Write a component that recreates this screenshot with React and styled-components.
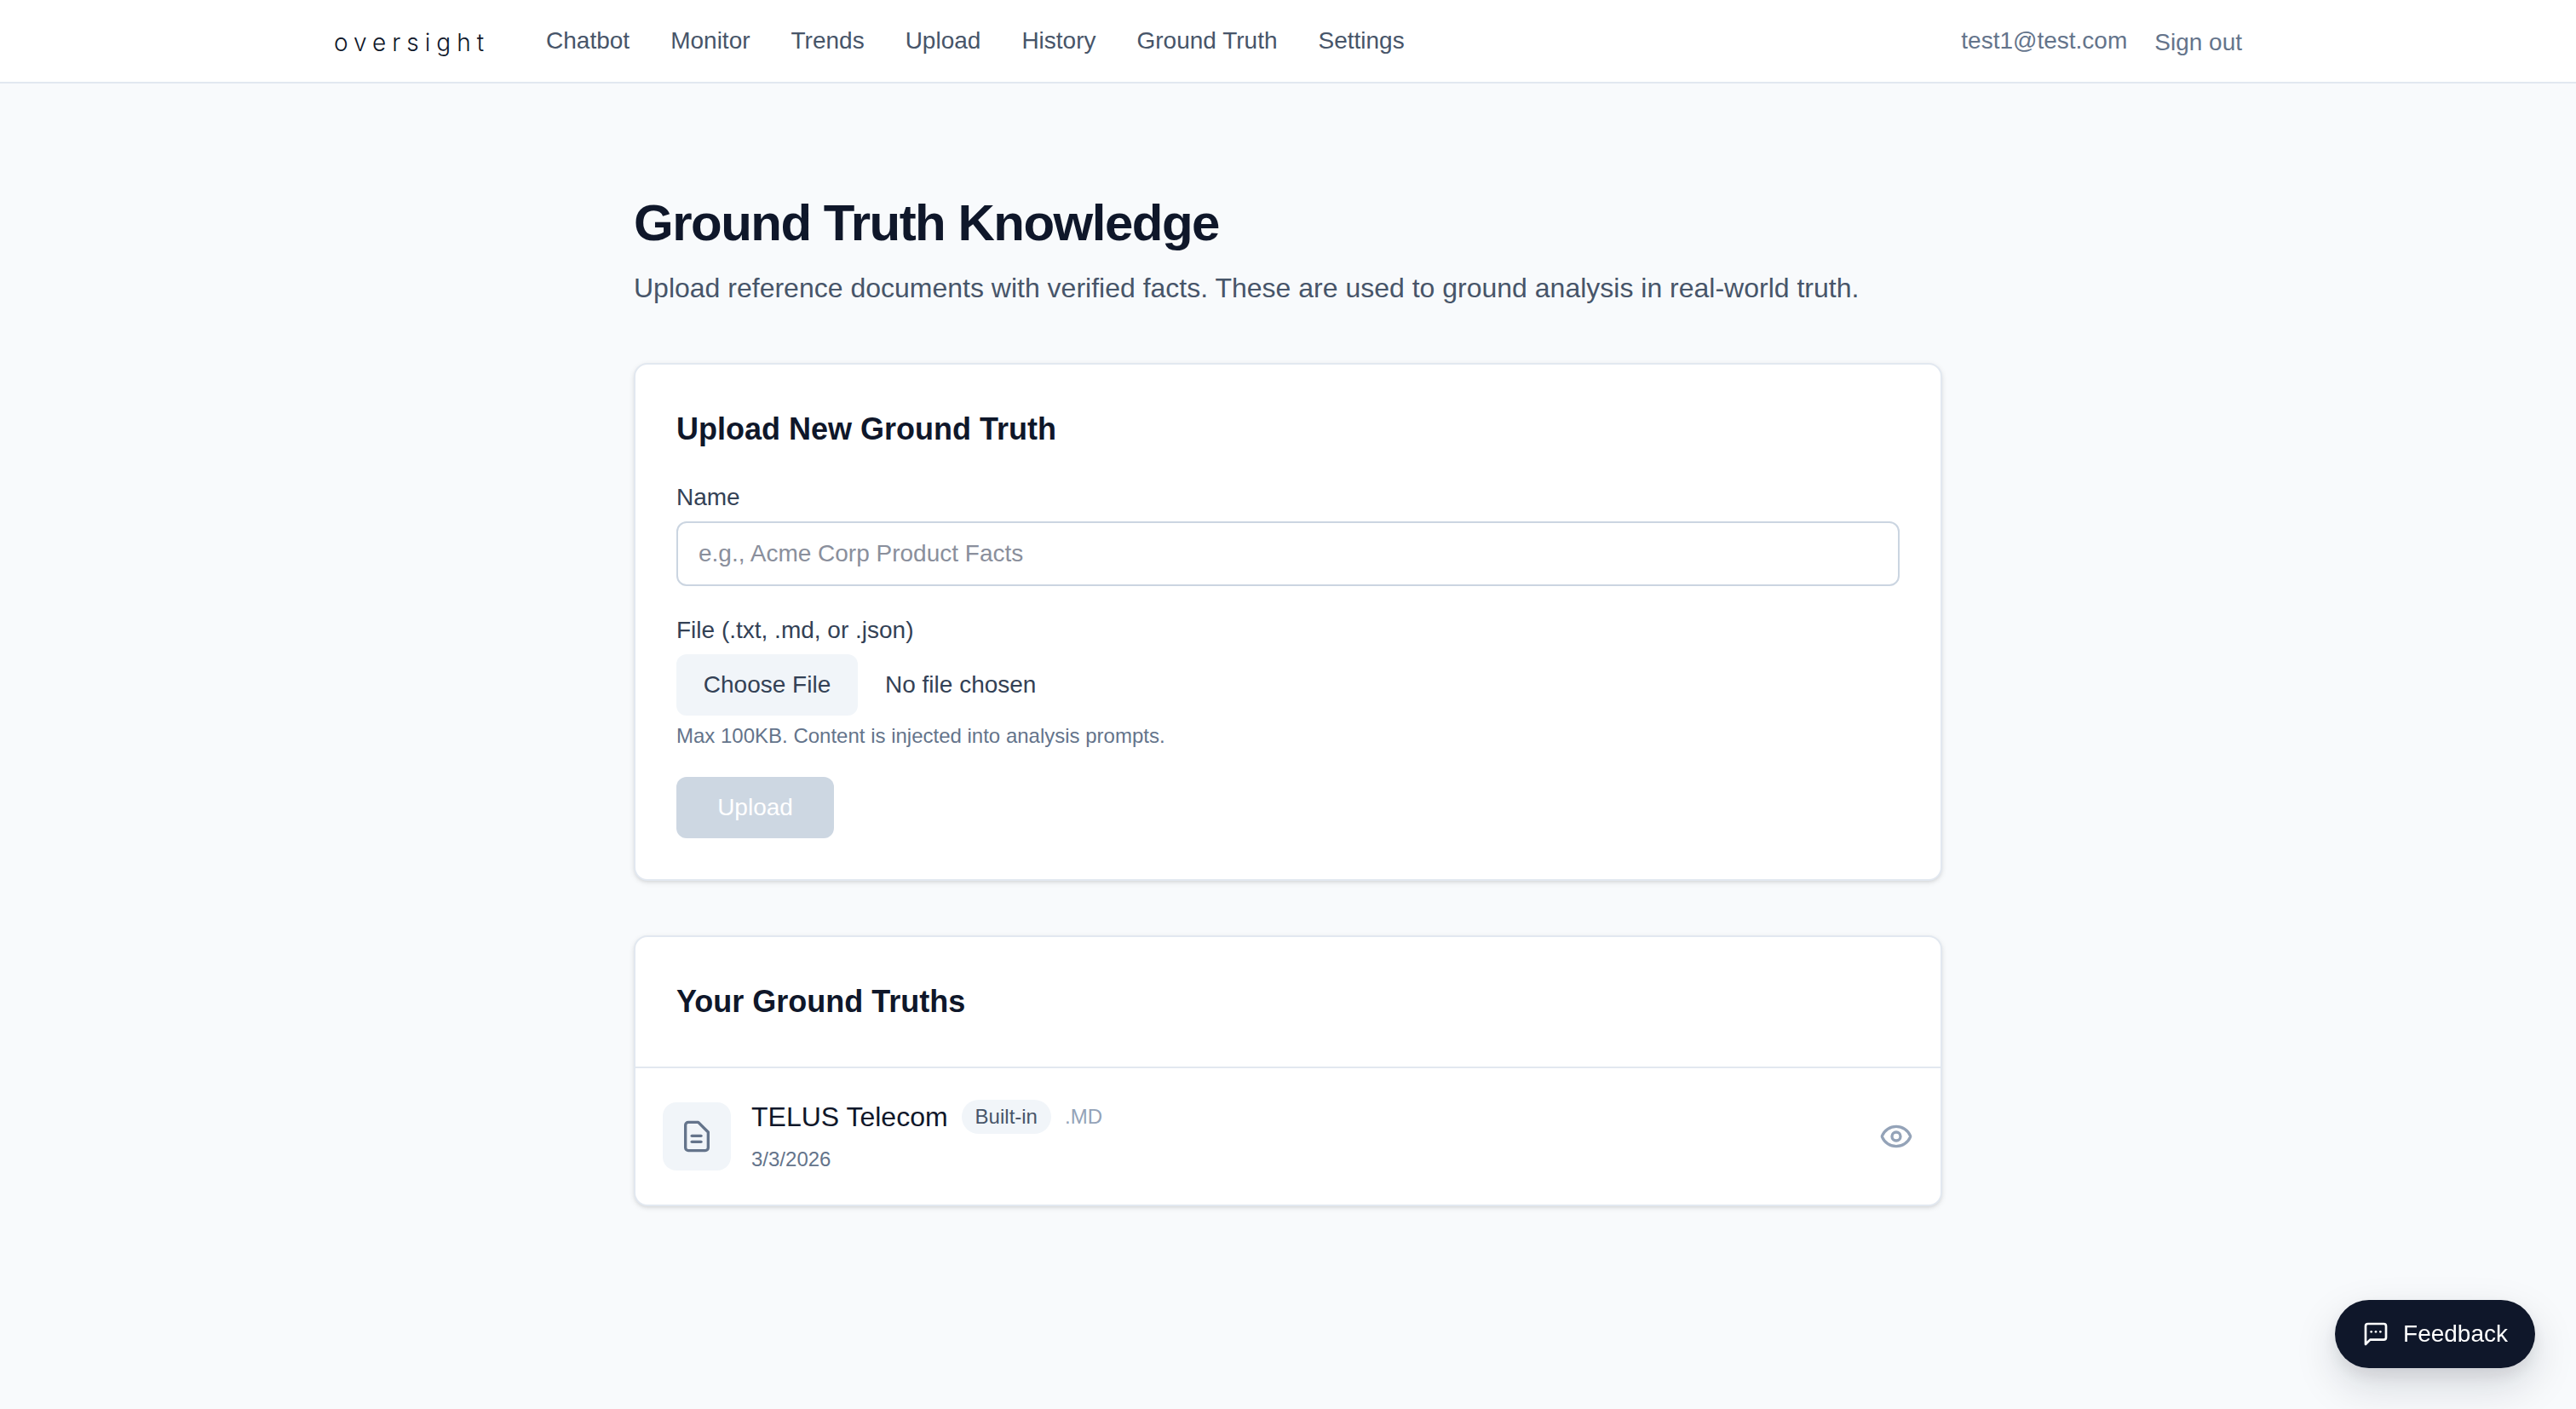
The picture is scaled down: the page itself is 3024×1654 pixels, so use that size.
import React from "react";
import styled, { createGlobalStyle } from "styled-components";
import { Eye } from "lucide-react";

const GlobalStyle = createGlobalStyle`
	html, body {
		margin: 0;
		padding: 0;
		background: #f8fafc;
		font-family: "Liberation Sans", Arial, sans-serif;
	}
	* {
		box-sizing: border-box;
	}
`;

const Page = styled.div`
	min-height: 1654px;
	background: #f8fafc;
`;

const TopBar = styled.header`
	height: 98px;
	background: #fff;
	border-bottom: 2px solid #e2e8f0;
`;

const TopBarInner = styled.div`
	max-width: 2304px;
	height: 100%;
	margin: 0 auto;
	padding: 0 32px;
	display: flex;
	align-items: center;
	justify-content: space-between;
`;

const LeftGroup = styled.div`
	display: flex;
	align-items: center;
	gap: 66px;
`;

const Logo = styled.span`
	font-family: "Inter", sans-serif;
	font-size: 28px;
	font-weight: 300;
	letter-spacing: 7px;
	color: #0f172a;
	position: relative;
	top: 2px;
`;

const NavLinks = styled.nav`
	display: flex;
	gap: 48px;
`;

const NavLink = styled.a`
	font-size: 28px;
	color: #475569;
	text-decoration: none;
`;

const RightGroup = styled.div`
	display: flex;
	align-items: center;
	gap: 32px;
	font-size: 28px;
	color: #64748b;
`;

const SignOut = styled.span`
	position: relative;
	top: 2px;
`;

const Main = styled.main`
	width: 1536px;
	margin: 0 auto;
	padding-top: 128px;
`;

const Title = styled.h1`
	margin: 0;
	font-size: 60px;
	line-height: 72px;
	font-weight: 700;
	color: #0f172a;
	letter-spacing: -0.025em;
`;

const Subtitle = styled.p`
	margin: 16px 0 0;
	font-size: 32px;
	line-height: 48px;
	color: #475569;
`;

const Card = styled.section`
	background: #fff;
	border: 2px solid #e2e8f0;
	border-radius: 16px;
	box-shadow: 0 2px 6px rgba(0, 0, 0, 0.1), 0 2px 4px -2px rgba(0, 0, 0, 0.1);
	margin-top: ${(props) => props.gap}px;
	padding: ${(props) => (props.flush ? "0" : "48px")};
`;

const CardHeading = styled.h2`
	margin: 0;
	font-size: 36px;
	line-height: 56px;
	font-weight: 700;
	color: #0f172a;
`;

const Field = styled.div`
	margin-top: ${(props) => props.gap}px;
`;

const Label = styled.label`
	display: block;
	font-size: 28px;
	line-height: 40px;
	color: #334155;
	margin-bottom: 8px;
`;

const TextInput = styled.input`
	display: block;
	width: 100%;
	height: 76px;
	padding: 0 24px;
	border: 2px solid #cbd5e1;
	border-radius: 12px;
	background: #fff;
	font-family: inherit;
	font-size: 28px;
	color: #0f172a;
	&::placeholder {
		color: #8a8f9c;
	}
`;

const FileRow = styled.div`
	display: flex;
	align-items: center;
	gap: 32px;
`;

const ChooseButton = styled.span`
	width: 213px;
	height: 72px;
	display: flex;
	align-items: center;
	justify-content: center;
	border-radius: 12px;
	background: #f1f5f9;
	font-size: 28px;
	color: #334155;
`;

const NoFile = styled.span`
	font-size: 28px;
	color: #334155;
`;

const Hint = styled.p`
	margin: 8px 0 0;
	font-size: 24px;
	line-height: 32px;
	color: #64748b;
`;

const UploadButton = styled.button`
	display: block;
	width: 185px;
	height: 72px;
	margin-top: 32px;
	border: none;
	border-radius: 12px;
	background: #cbd5e1;
	font-family: inherit;
	font-size: 28px;
	color: #fff;
	opacity: 0.95;
`;

const ListHeader = styled.div`
	padding: 48px;
	height: 154px;
	display: flex;
	align-items: center;
	border-bottom: 2px solid #e2e8f0;
`;

const ListRow = styled.div`
	height: 160px;
	padding: 0 32px;
	display: flex;
	align-items: center;
	gap: 24px;
`;

const IconBox = styled.div`
	width: 80px;
	height: 80px;
	flex: none;
	display: flex;
	align-items: center;
	justify-content: center;
	border-radius: 16px;
	background: #f1f5f9;
	color: #64748b;
`;

const RowText = styled.div`
	flex: 1;
`;

const RowTitle = styled.div`
	display: flex;
	align-items: center;
	gap: 16px;
`;

const RowName = styled.span`
	font-size: 32px;
	color: #0f172a;
`;

const Badge = styled.span`
	height: 40px;
	padding: 0 16px;
	display: flex;
	align-items: center;
	border-radius: 20px;
	background: #f1f5f9;
	font-size: 24px;
	color: #475569;
`;

const Extension = styled.span`
	font-size: 24px;
	color: #94a3b8;
`;

const RowDate = styled.div`
	margin-top: 14px;
	font-size: 24px;
	line-height: 32px;
	color: #64748b;
`;

const ViewIcon = styled(Eye)`
	color: #94a3b8;
	flex: none;
`;

const FeedbackButton = styled.button`
	position: fixed;
	right: 48px;
	bottom: 48px;
	height: 80px;
	padding: 0 32px;
	display: flex;
	align-items: center;
	gap: 16px;
	border: none;
	border-radius: 40px;
	background: #0f172a;
	color: #fff;
	font-family: inherit;
	font-size: 28px;
	box-shadow: 0 20px 50px rgba(15, 23, 42, 0.15), 0 8px 20px rgba(15, 23, 42, 0.08);
`;

const FileIcon = () => (
	<svg
		xmlns='http://www.w3.org/2000/svg'
		width='40'
		height='40'
		viewBox='0 0 24 24'
		fill='none'
		stroke='currentColor'
		strokeWidth='2'
		strokeLinecap='round'
		strokeLinejoin='round'>
		<path d='M13 2H6a2 2 0 0 0-2 2v16a2 2 0 0 0 2 2h12a2 2 0 0 0 2-2V9z'></path>
		<line x1='8.5' y1='11.6' x2='15' y2='11.6'></line>
		<line x1='8.5' y1='15.8' x2='15' y2='15.8'></line>
	</svg>
);

const ChatIcon = () => (
	<svg
		xmlns='http://www.w3.org/2000/svg'
		width='32'
		height='32'
		viewBox='0 0 24 24'
		fill='none'
		stroke='currentColor'
		strokeWidth='2'
		strokeLinecap='round'
		strokeLinejoin='round'>
		<path d='M21 15a2 2 0 0 1-2 2H7l-4 4V5a2 2 0 0 1 2-2h14a2 2 0 0 1 2 2z'></path>
		<line x1='8' y1='10' x2='8.01' y2='10'></line>
		<line x1='12' y1='10' x2='12.01' y2='10'></line>
		<line x1='16' y1='10' x2='16.01' y2='10'></line>
	</svg>
);

const links = ["Chatbot", "Monitor", "Trends", "Upload", "History", "Ground Truth", "Settings"];

export default function App() {
	return (
		<Page>
			<GlobalStyle />
			<TopBar>
				<TopBarInner>
					<LeftGroup>
						<Logo>oversight</Logo>
						<NavLinks>
							{links.map((link) => (
								<NavLink key={link}>{link}</NavLink>
							))}
						</NavLinks>
					</LeftGroup>
					<RightGroup>
						<span>test1@test.com</span>
						<SignOut>Sign out</SignOut>
					</RightGroup>
				</TopBarInner>
			</TopBar>
			<Main>
				<Title>Ground Truth Knowledge</Title>
				<Subtitle>
					Upload reference documents with verified facts. These are used to ground analysis in real-world truth.
				</Subtitle>
				<Card gap={64}>
					<CardHeading>Upload New Ground Truth</CardHeading>
					<Field gap={32}>
						<Label>Name</Label>
						<TextInput placeholder='e.g., Acme Corp Product Facts' />
					</Field>
					<Field gap={32}>
						<Label>File (.txt, .md, or .json)</Label>
						<FileRow>
							<ChooseButton>Choose File</ChooseButton>
							<NoFile>No file chosen</NoFile>
						</FileRow>
						<Hint>Max 100KB. Content is injected into analysis prompts.</Hint>
					</Field>
					<UploadButton>Upload</UploadButton>
				</Card>
				<Card gap={64} flush>
					<ListHeader>
						<CardHeading>Your Ground Truths</CardHeading>
					</ListHeader>
					<ListRow>
						<IconBox>
							<FileIcon />
						</IconBox>
						<RowText>
							<RowTitle>
								<RowName>TELUS Telecom</RowName>
								<Badge>Built-in</Badge>
								<Extension>.MD</Extension>
							</RowTitle>
							<RowDate>3/3/2026</RowDate>
						</RowText>
						<ViewIcon size={40} />
					</ListRow>
				</Card>
			</Main>
			<FeedbackButton>
				<ChatIcon />
				Feedback
			</FeedbackButton>
		</Page>
	);
}
